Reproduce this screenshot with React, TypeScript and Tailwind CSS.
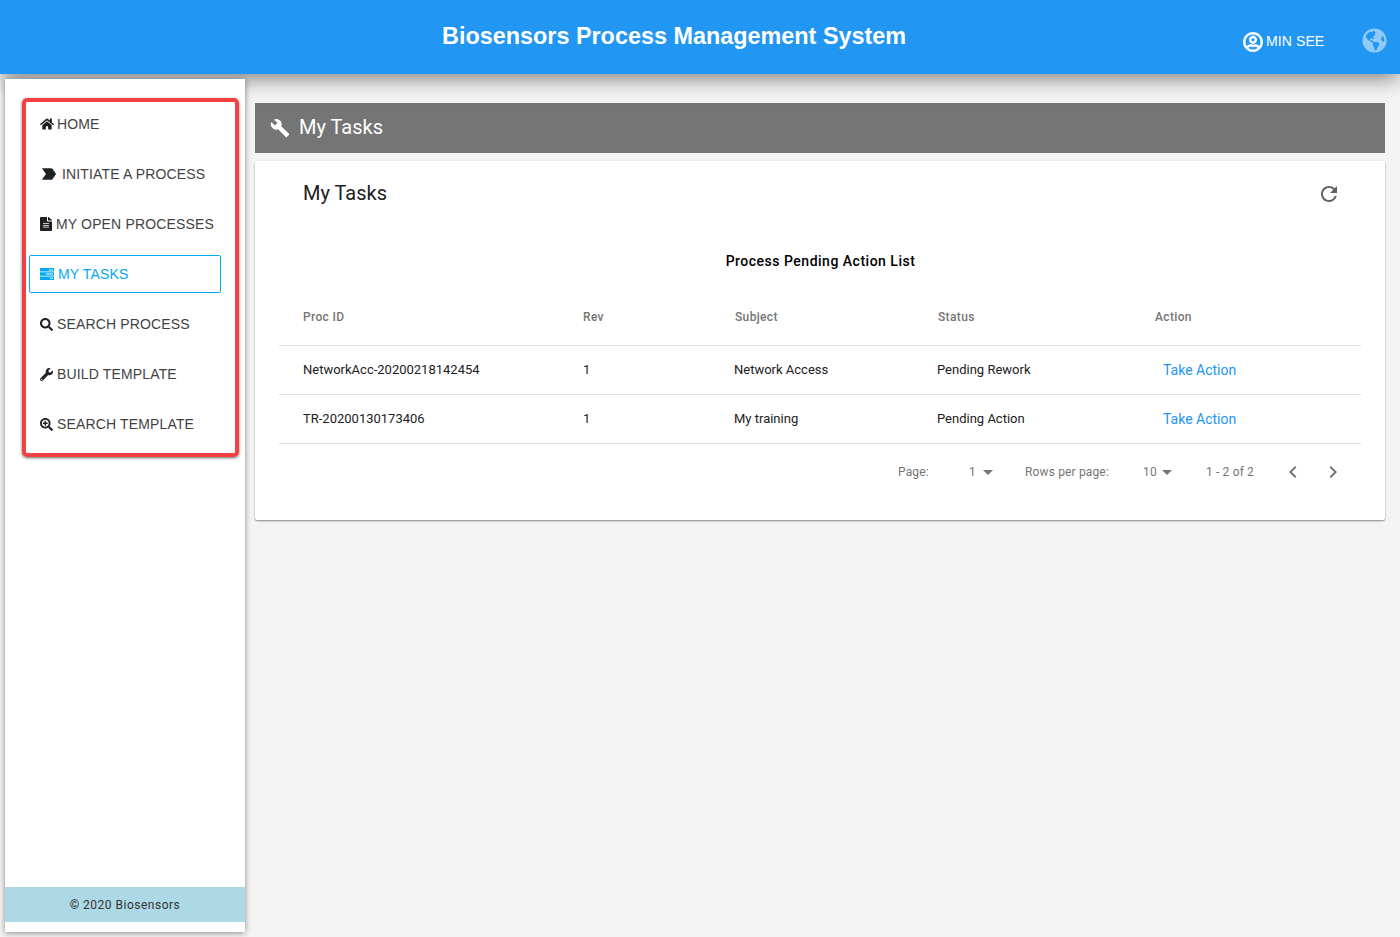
import React from "react";
import { FaHome, FaFileAlt, FaSearch, FaWrench, FaSearchPlus, FaGlobeAmericas, FaRegUserCircle } from "react-icons/fa";
import { MdLabelImportant, MdBuild, MdRefresh, MdChevronLeft, MdChevronRight, MdArrowDropDown } from "react-icons/md";

function TasksIcon() {
  return (
    <svg width="14" height="12" viewBox="0 0 14 12" fill="currentColor" className="mr-[4px] shrink-0">
      <path d="M0 0h14v3.4H0z M9 1.4v1h4v-1z" fillRule="evenodd" />
      <path d="M0 4.3h14v3.4H0z M6 5.5v1h7v-1z" fillRule="evenodd" />
      <path d="M0 8.6h14V12H0z M10 9.8v1h3v-1z" fillRule="evenodd" />
    </svg>
  );
}

function NavItem({ icon, label, active }: { icon: React.ReactNode; label: string; active?: boolean }) {
  return (
    <div
      className={
        active
          ? "h-[38px] pl-[10px] flex items-center rounded-[2px] border border-[#03a9f4] text-[#03a9f4]"
          : "h-[38px] pl-[11px] flex items-center text-[#424242]"
      }
    >
      {icon}
      <span>{label}</span>
    </div>
  );
}

function HeadCell({ w, children }: { w: string; children: React.ReactNode }) {
  return <div className={`${w} text-[12px] font-medium tracking-[0.35px] text-[#757575]`}>{children}</div>;
}

export default function App() {
  return (
    <div className="relative w-[1400px] h-[937px] overflow-hidden bg-[#f4f4f4] font-['Roboto',sans-serif] text-[#212121]">
      <header className="relative z-10 h-[74px] bg-[#2196f3] text-white flex shadow-[0_6px_20px_-2px_rgba(0,0,0,0.5)]">
        <div className="w-[1348px] pl-[442px] pt-[21px] text-[23.4px] leading-[30px] font-bold font-['Liberation_Sans',sans-serif] whitespace-nowrap">
          Biosensors Process Management System
        </div>
      </header>
      <div className="absolute z-20 top-[31px] left-[1243px] flex items-center text-white font-['Liberation_Sans',sans-serif] text-[14px] tracking-[0.1px]">
        <FaRegUserCircle className="w-[20px] h-[20px] mr-[3px] stroke-[16px]" />
        <span>MIN SEE</span>
      </div>
      <FaGlobeAmericas className="absolute z-20 top-[28px] left-[1362px] w-[25px] h-[25px] text-[#90caf9]" />

      <div className="flex h-[863px]">
        <aside className="relative z-20 ml-[5px] mt-[5px] w-[240px] h-[853px] bg-white shadow-[0_1px_6px_rgba(0,0,0,0.45)] flex flex-col font-['Liberation_Sans',sans-serif] text-[14px] tracking-[0.15px]">
          <nav className="mt-[19px] ml-[17px] w-[217px] h-[359px] border-[4px] border-[#f44040] rounded-[5px] pt-[3px] pl-[3px] pr-[14px] flex flex-col gap-[12px] shadow-[0_1px_3px_rgba(0,0,0,0.6)]">
            <NavItem icon={<FaHome className="w-[14px] h-[14px] mr-[3px] text-[#212121]" />} label="HOME" />
            <NavItem icon={<MdLabelImportant className="w-[20px] h-[20px] mr-[3px] -ml-[1px] text-[#212121]" />} label="INITIATE A PROCESS" />
            <NavItem icon={<FaFileAlt preserveAspectRatio="none" className="w-[12px] h-[14px] mr-[4px] text-[#212121]" />} label="MY OPEN PROCESSES" />
            <NavItem active icon={<TasksIcon />} label="MY TASKS" />
            <NavItem icon={<FaSearch className="w-[13px] h-[13px] mr-[4px] text-[#212121]" />} label="SEARCH PROCESS" />
            <NavItem icon={<FaWrench className="w-[13px] h-[13px] mr-[4px] text-[#212121]" />} label="BUILD TEMPLATE" />
            <NavItem icon={<FaSearchPlus className="w-[13px] h-[13px] mr-[4px] text-[#212121]" />} label="SEARCH TEMPLATE" />
          </nav>
          <div className="mt-auto mb-[10px] h-[35px] bg-[#add8e6] flex items-center justify-center font-['Roboto',sans-serif] text-[12px] tracking-[0.5px] text-[#333333]">
            © 2020 Biosensors
          </div>
        </aside>

        <main className="ml-[10px] mt-[29px] w-[1130px]">
          <div className="h-[50px] bg-[#757575] text-white flex items-center pl-[15px] pb-[2px] text-[20px]">
            <MdBuild className="w-[20px] h-[20px] mr-[9px] mt-[2px]" />
            <span>My Tasks</span>
          </div>
          <section className="mt-[8px] h-[359px] bg-white rounded-[2px] shadow-[0_1px_2px_rgba(0,0,0,0.45)] pt-[18px]">
            <div className="flex items-center justify-between pl-[48px] pr-[44px] h-[28px]">
              <span className="text-[20px] text-[#212121]">My Tasks</span>
              <MdRefresh className="w-[24px] h-[24px] mt-[2px] text-[#616161]" />
            </div>
            <div className="mt-[44px] text-center text-[14px] leading-[20px] font-medium text-[#000000] tracking-[0.5px] w-[1131px]">
              Process Pending Action List
            </div>
            <div className="mx-[24px] mt-[18px]">
              <div className="h-[57px] flex items-center border-b border-[#e0e0e0] pl-[24px]">
                <HeadCell w="w-[280px]">Proc ID</HeadCell>
                <HeadCell w="w-[152px]">Rev</HeadCell>
                <HeadCell w="w-[203px]">Subject</HeadCell>
                <HeadCell w="w-[217px]">Status</HeadCell>
                <HeadCell w="w-[100px]">Action</HeadCell>
              </div>
              {[
                ["NetworkAcc-20200218142454", "1", "Network Access", "Pending Rework"],
                ["TR-20200130173406", "1", "My training", "Pending Action"],
              ].map((r) => (
                <div key={r[0]} className="h-[49px] flex items-center border-b border-[#e0e0e0] pl-[24px] text-[13px] text-[#212121]">
                  <div className="w-[280px]">{r[0]}</div>
                  <div className="w-[151px]">{r[1]}</div>
                  <div className="w-[203px]">{r[2]}</div>
                  <div className="w-[226px]">{r[3]}</div>
                  <div className="text-[14px] text-[#2196f3]">Take Action</div>
                </div>
              ))}
              <div className="h-[56px] flex items-center text-[12px] tracking-[0.15px] text-[#757575] pl-[619px] whitespace-nowrap">
                <span className="w-[71px]">Page:</span>
                <span className="w-[9px]">1</span>
                <MdArrowDropDown className="w-[24px] h-[24px] -ml-[2px]" />
                <span className="ml-[25px] w-[118px]">Rows per page:</span>
                <span className="w-[14px]">10</span>
                <MdArrowDropDown className="w-[24px] h-[24px] -ml-[2px]" />
                <span className="ml-[27px] w-[47px]">1 - 2 of 2</span>
                <MdChevronLeft className="w-[24px] h-[24px] ml-[28px]" />
                <MdChevronRight className="w-[24px] h-[24px] ml-[16px]" />
              </div>
            </div>
          </section>
        </main>
      </div>
    </div>
  );
}
